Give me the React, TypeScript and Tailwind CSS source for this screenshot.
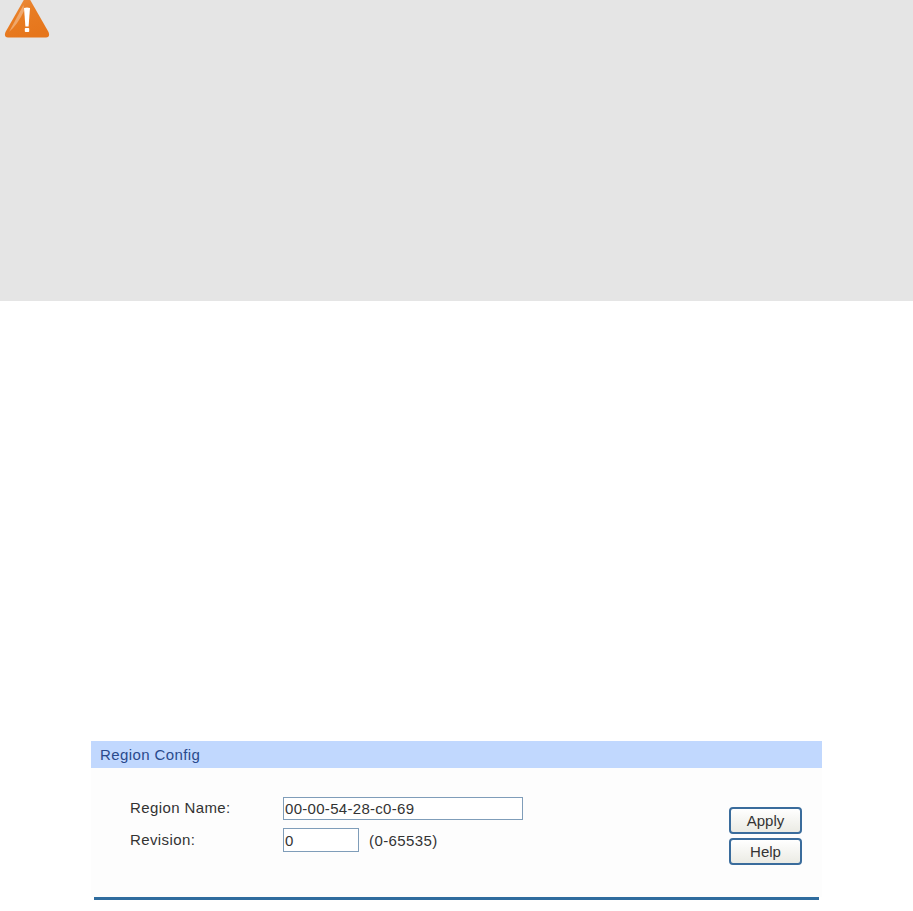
function WarningIcon() {
  return (
    <svg width="46" height="40" viewBox="0 0 46 40" className="block">
      <defs>
        <linearGradient id="warn" x1="0" y1="0" x2="0.5" y2="1">
          <stop offset="0" stopColor="#eb8f45" />
          <stop offset="0.5" stopColor="#e87c22" />
          <stop offset="1" stopColor="#e6761c" />
        </linearGradient>
      </defs>
      <path
        d="M19.5 0.5 Q23 -2.5 26.5 0.5 L44.5 32 Q46.5 37 42 37.5 L4 37.5 Q-0.5 37 1.5 32 Z"
        fill="url(#warn)"
      />
      <path d="M19.5 5 L5 32 Q14 24 20 11 Z" fill="#f5c49c" opacity="0.6" />
      <path d="M20 8 Q23 7 26 8 L24.6 26.5 L21.4 26.5 Z" fill="#fff" />
      <rect x="20.8" y="28" width="4.4" height="4" rx="0.8" fill="#fff" />
    </svg>
  );
}

function FieldRow({ label, value, inputClass, hint }: { label: string; value: string; inputClass: string; hint?: string }) {
  return (
    <div className="flex items-center">
      <span className="w-[153px] text-[15px] tracking-[0.4px] text-[#333]">{label}</span>
      <input
        readOnly
        value={value}
        className={`${inputClass} border border-[#7f9db9] bg-white px-[1px] text-[15px] tracking-[0.3px] text-[#333] outline-none`}
      />
      {hint && <span className="ml-[10px] mt-[2px] text-[15px] tracking-[0.4px] text-[#333]">{hint}</span>}
    </div>
  );
}

function ActionButton({ label }: { label: string }) {
  return (
    <button className="flex h-[27px] w-[73px] items-center justify-center rounded-[4px] border-2 border-[#3a6c9c] bg-gradient-to-b from-white to-[#ebebe4] pt-[2px] text-[15px] text-[#333]">
      {label}
    </button>
  );
}

export default function App() {
  return (
    <div className="min-h-[911px] bg-white font-['Liberation_Sans',Arial,sans-serif]">
      <div className="h-[301px] overflow-hidden bg-[#e5e5e5] pl-[4px]">
        <WarningIcon />
      </div>
      <div className="mt-[440px] ml-[91px] w-[731px]">
        <div className="flex h-[27px] items-center bg-[#c1d8fe] pl-[9px] pt-[1px] text-[15px] tracking-[0.4px] text-[#2a4a8c]">
          Region Config
        </div>
        <div className="flex h-[129px] items-start justify-between bg-[#fdfdfd] pl-[39px] pr-[20px]">
          <div className="mt-[29px] flex flex-col gap-[8px]">
            <FieldRow label="Region Name:" value="00-00-54-28-c0-69" inputClass="h-[23px] w-[240px]" />
            <FieldRow label="Revision:" value="0" inputClass="h-[24px] w-[76px]" hint="(0-65535)" />
          </div>
          <div className="mt-[39px] flex flex-col gap-[4px]">
            <ActionButton label="Apply" />
            <ActionButton label="Help" />
          </div>
        </div>
        <div className="mx-[3px] h-[3px] bg-[#2f6c9e]" />
      </div>
    </div>
  );
}
